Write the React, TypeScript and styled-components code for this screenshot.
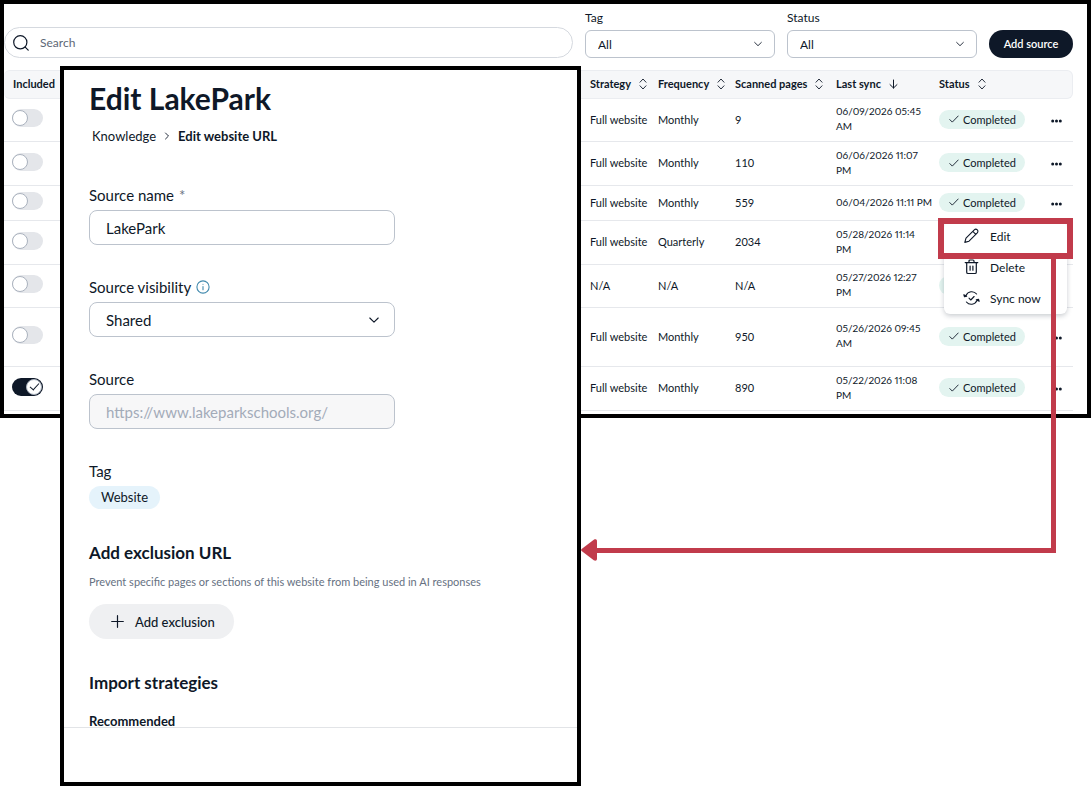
import React from "react";
import styled, { createGlobalStyle, css } from "styled-components";

const ink = "#0e1828";
const accent = "#c13b4b";

const GlobalStyle = createGlobalStyle`
  *, *::before, *::after { box-sizing: border-box; }
  body { margin: 0; background: #fff; }
  body, button, input, select {
    font-family: Lato, "Liberation Sans", sans-serif;
    color: ${ink};
  }
`;

const Canvas = styled.main`
  display: grid;
  grid-template-columns: 60px minmax(0, 521fr) minmax(0, 510fr);
  align-items: start;
`;

const ListFrame = styled.section`
  grid-area: 1 / 1 / 2 / 4;
  border: 4px solid #000;
  padding: 6px 14px 3px 0;
`;

const Toolbar = styled.div`
  display: flex;
  align-items: flex-end;
  gap: 12px;
  margin-bottom: 12px;
`;

const SearchBox = styled.label`
  flex: 1;
  display: flex;
  align-items: center;
  gap: 11px;
  height: 31px;
  padding: 0 8px;
  border: 1px solid #d5d9df;
  border-radius: 16px;
`;

const SearchInput = styled.input`
  flex: 1;
  min-width: 0;
  border: 0;
  padding: 0;
  outline: none;
  background: transparent;
  font-size: 12px;
  &::placeholder { color: #5d6776; opacity: 1; }
`;

const Filter = styled.div`
  width: 190px;
  display: flex;
  flex-direction: column;
  gap: 4px;
`;

const FilterLabel = styled.label`
  font-size: 12px;
  line-height: 16px;
`;

const SelectWrap = styled.div<{ $large?: boolean }>`
  display: grid;
  align-items: center;
  select, svg { grid-area: 1 / 1; }
  svg {
    justify-self: end;
    margin-right: ${(p) => (p.$large ? 16 : 13)}px;
    pointer-events: none;
  }
`;

const fieldBox = css<{ $large?: boolean }>`
  width: 100%;
  height: ${(p) => (p.$large ? 35 : 28)}px;
  padding: 0 ${(p) => (p.$large ? 16 : 12)}px;
  border: 1px solid #bcc3cd;
  border-radius: ${(p) => (p.$large ? 8 : 6)}px;
  background: #fff;
  font-size: ${(p) => (p.$large ? 15 : 12)}px;
`;

const Select = styled.select<{ $large?: boolean }>`
  ${fieldBox}
  appearance: none;
`;

const TextInput = styled.input<{ $large?: boolean }>`
  ${fieldBox}
  &:disabled {
    background: #f7f7f8;
    color: #a3abb8;
  }
`;

const PrimaryButton = styled.button`
  width: 84px;
  height: 28px;
  padding: 0 0 2px;
  border: 0;
  border-radius: 14px;
  background: ${ink};
  color: #fff;
  font-size: 11px;
  font-weight: 600;
`;

const Table = styled.table`
  width: 100%;
  table-layout: fixed;
  border-collapse: separate;
  border-spacing: 0;
  font-size: 11px;
  line-height: 15px;
`;

const HeadCell = styled.th<{ $width?: number }>`
  width: ${(p) => (p.$width ? `${p.$width}px` : "auto")};
  height: 29px;
  padding: 0 0 2px 9px;
  background: #f6f7f9;
  border: solid #ebedf1;
  border-width: 1px 0;
  text-align: left;
  font-weight: 700;
  white-space: nowrap;
  &:first-child { border-radius: 6px 0 0 6px; }
  &:last-child { border-right-width: 1px; border-radius: 0 6px 6px 0; }
`;

const HeadLabel = styled.span`
  display: flex;
  align-items: center;
  gap: 8px;
`;

const Row = styled.tr<{ $height: number }>`
  height: ${(p) => p.$height}px;
`;

const Cell = styled.td`
  padding: 0 0 2px 9px;
  border-bottom: 1px solid #e6e8ec;
  white-space: nowrap;
  &:first-child { padding-left: 8px; }
`;

const DateCell = styled(Cell)`
  font-size: 10px;
  white-space: pre;
  font-variant-numeric: proportional-nums;
`;

const ActionCell = styled(Cell)`
  position: relative;
  padding-left: 0;
  text-align: center;
`;

const Toggle = styled.input`
  appearance: none;
  display: grid;
  align-items: center;
  width: 31px;
  height: 18px;
  margin: 0 0 2px;
  border-radius: 9px;
  background: #e4e6ea;
  &::before {
    content: "";
    grid-area: 1 / 1;
    width: 16px;
    height: 16px;
    border: 1px solid #aab2be;
    border-radius: 50%;
    background: #fff;
  }
  &:checked { background: ${ink}; }
  &:checked::before { justify-self: end; margin-right: 1px; }
  &:checked::after {
    content: "";
    grid-area: 1 / 1;
    justify-self: end;
    width: 9px;
    height: 5px;
    margin: 0 4px 2px 0;
    border: solid ${ink};
    border-width: 0 0 1px 1px;
    rotate: -48deg;
  }
`;

const Pill = styled.span`
  display: inline-flex;
  align-items: center;
  gap: 4px;
  height: 19px;
  padding: 0 9px 0 10px;
  border-radius: 10px;
  background: #e3f4f0;
  vertical-align: middle;
`;

const IconButton = styled.button`
  display: inline-flex;
  padding: 4px;
  border: 0;
  background: none;
  vertical-align: middle;
`;

const Menu = styled.div`
  position: absolute;
  z-index: 2;
  top: 1px;
  right: 6px;
  width: 123px;
  display: grid;
  gap: 1px;
  border-radius: 6px;
  background: #fff;
  box-shadow: 0 2px 5px rgba(20, 30, 50, 0.22);
`;

const MenuItem = styled.button<{ $marked?: boolean }>`
  position: relative;
  display: flex;
  align-items: center;
  gap: 10px;
  height: 30px;
  padding: 0 19px 2px;
  border: 0;
  background: none;
  font-size: 12px;
  ${(p) =>
    p.$marked &&
    css`
      z-index: 1;
      &::after {
        content: "";
        position: absolute;
        inset: -4px -6px -7px;
        border: 6px solid ${accent};
      }
    `}
`;

const Editor = styled.section`
  grid-area: 1 / 2 / 2 / 3;
  z-index: 3;
  margin-top: 66px;
  border: 4px solid #000;
  background: #fff;
`;

const EditorBody = styled.div`
  padding: 12px 25px 0;
`;

const Title = styled.h1`
  margin: 0 0 12px;
  font-size: 30px;
  line-height: 32px;
  font-weight: 700;
`;

const Breadcrumb = styled.nav`
  display: flex;
  align-items: center;
  gap: 8px;
  margin-bottom: 39px;
  padding-left: 3px;
  font-size: 13px;
  line-height: 20px;
  a { color: inherit; text-decoration: none; }
  strong { font-weight: 700; }
`;

const Form = styled.form`
  display: grid;
  gap: 32px;
  max-width: 306px;
`;

const Field = styled.div`
  display: flex;
  flex-direction: column;
  align-items: flex-start;
  gap: 5px;
  > div { width: 100%; }
`;

const FieldLabel = styled.label`
  display: flex;
  align-items: center;
  gap: 5px;
  font-size: 15px;
  line-height: 20px;
`;

const Required = styled.span`
  color: #6b7482;
`;

const Chip = styled.span`
  height: 23px;
  padding: 0 12px;
  border-radius: 12px;
  background: #e5f3fb;
  font-size: 13px;
  line-height: 23px;
`;

const SectionTitle = styled.h2`
  margin: 33px 0 10px;
  font-size: 17px;
  line-height: 22px;
  font-weight: 700;
`;

const Hint = styled.p`
  margin: 0 0 14px;
  color: #667182;
  font-size: 11px;
  line-height: 16px;
  white-space: nowrap;
`;

const SecondaryButton = styled.button`
  display: flex;
  align-items: center;
  gap: 11px;
  height: 35px;
  padding: 0 19px 0 22px;
  border: 0;
  border-radius: 18px;
  background: #eff0f2;
  font-size: 13px;
  font-weight: 500;
`;

const SubTitle = styled.h3`
  margin: 21px 0 0;
  font-size: 13px;
  line-height: 12px;
  font-weight: 700;
`;

const EditorFooter = styled.footer`
  height: 55px;
  border-top: 1px solid #e2e4e7;
`;

const Connector = styled.div`
  grid-area: 1 / 3 / 2 / 4;
  z-index: 4;
  position: relative;
  height: 294px;
  margin: 259px 35px 0 8px;
  border: solid ${accent};
  border-width: 0 5px 5px 0;
  pointer-events: none;
  svg { position: absolute; left: -8px; bottom: -13px; }
`;

const line = {
  fill: "none",
  stroke: "currentColor",
  strokeLinecap: "round",
  strokeLinejoin: "round",
} as const;

const SearchIcon = () => (
  <svg width="16" height="16" viewBox="0 0 16 16" {...line} strokeWidth="1.2" aria-hidden>
    <circle cx="7.3" cy="7.3" r="6.6" />
    <path d="m12.2 12.2 3 3" />
  </svg>
);
const Chevron = ({ size = 8 }: { size?: number }) => (
  <svg width={size} height={size} viewBox="0 0 10 10" {...line} strokeWidth="1.1" aria-hidden>
    <path d="m.8 3 4.2 4.1L9.2 3" />
  </svg>
);
const Caret = () => (
  <svg width="6" height="8" viewBox="0 0 6 8" {...line} strokeWidth="0.9" aria-hidden>
    <path d="m1.5 1 3 3-3 3" />
  </svg>
);
const SortIcon = () => (
  <svg width="8" height="12" viewBox="0 0 8 12" {...line} strokeWidth="0.9" aria-hidden>
    <path d="M1 4.2 4 1l3 3.2M1 7.8 4 11l3-3.2" />
  </svg>
);
const DownIcon = () => (
  <svg width="9" height="10" viewBox="0 0 9 10" {...line} strokeWidth="1" aria-hidden>
    <path d="M4.5 1v8M1 5.6 4.5 9 8 5.600" />
  </svg>
);
const CheckIcon = () => (
  <svg width="10" height="8" viewBox="0 0 10 8" {...line} strokeWidth="0.9" aria-hidden>
    <path d="m.8 4.6 2.5 2.5L9.2 1" />
  </svg>
);
const DotsIcon = () => (
  <svg width="11" height="4" viewBox="0 0 11 4" fill="currentColor" aria-hidden>
    <circle cx="1.7" cy="2" r="1.5" />
    <circle cx="5.5" cy="2" r="1.5" />
    <circle cx="9.3" cy="2" r="1.5" />
  </svg>
);
const PencilIcon = () => (
  <svg width="17" height="16" viewBox="0 0 17 16" {...line} strokeWidth="1.1" aria-hidden>
    <path d="M1.8 14.4 3 10.2l8.300-8.400a2.100 2.100 0 0 1 3 3L6 13.200ZM9.800 3.400l3 3" />
  </svg>
);
const TrashIcon = () => (
  <svg width="17" height="16" viewBox="0 0 17 16" {...line} strokeWidth="1.2" aria-hidden>
    <path d="M2.2 3.600h12.600M3.700 3.600v9.600a1.300 1.300 0 0 0 1.300 1.300h7a1.300 1.300 0 0 0 1.300-1.300V3.600M6 3.400V2a1 1 0 0 1 1-1h3a1 1 0 0 1 1 1v1.400M7.100 7v4.200M9.900 7v4.200" />
  </svg>
);
const SyncIcon = () => (
  <svg width="17" height="16" viewBox="0 0 17 16" {...line} strokeWidth="1.1" aria-hidden>
    <path d="M3 5.400A6.300 6.300 0 0 1 13.600 4M14 10.600A6.300 6.300 0 0 1 3.400 12M6 8.200l1.800 1.800 3.300-3.500" />
    <path d="M.8 4.700 1.500 6.800l2.200-.6ZM16.200 11.300l-.7-2.100-2.200.6Z" fill="currentColor" />
  </svg>
);
const InfoIcon = () => (
  <svg width="14" height="14" viewBox="0 0 14 14" {...line} stroke="#4089ad" strokeWidth="1.1" aria-hidden>
    <circle cx="7" cy="7" r="6.1" />
    <path d="M7 6.500v3.300M7 4.200v.1" />
  </svg>
);
const PlusIcon = () => (
  <svg width="13" height="13" viewBox="0 0 13 13" {...line} strokeWidth="1.2" aria-hidden>
    <path d="M6.500.7v11.600M.7 6.500h11.600" />
  </svg>
);
const ArrowHead = () => (
  <svg width="17" height="22" viewBox="0 0 17 22" fill={accent} aria-hidden>
    <path d="M.6 10 12.800.8c1.500-1 3.200-.4 3.200 1.400v17.600c0 1.800-1.700 2.400-3.200 1.400L.6 12q-1-1 0-2Z" />
  </svg>
);

type Source = {
  strategy: string;
  frequency: string;
  pages: string;
  sync: string;
  status?: string;
  height: number;
  included?: boolean;
  menu?: boolean;
};

const sources: Source[] = [
  { strategy: "Full website", frequency: "Monthly", pages: "9", sync: "06/09/2026 05:45\nAM", status: "Completed", height: 43 },
  { strategy: "Full website", frequency: "Monthly", pages: "110", sync: "06/06/2026 11:07\nPM", status: "Completed", height: 44 },
  { strategy: "Full website", frequency: "Monthly", pages: "559", sync: "06/04/2026 11:11 PM", status: "Completed", height: 35 },
  { strategy: "Full website", frequency: "Quarterly", pages: "2034", sync: "05/28/2026 11:14\nPM", height: 44, menu: true },
  { strategy: "N/A", frequency: "N/A", pages: "N/A", sync: "05/27/2026 12:27\nPM", status: "Completed", height: 43 },
  { strategy: "Full website", frequency: "Monthly", pages: "950", sync: "05/26/2026 09:45\nAM", status: "Completed", height: 59 },
  { strategy: "Full website", frequency: "Monthly", pages: "890", sync: "05/22/2026 11:08\nPM", status: "Completed", height: 44, included: true },
];

const FilterSelect = ({ id, label }: { id: string; label: string }) => (
  <Filter>
    <FilterLabel htmlFor={id}>{label}</FilterLabel>
    <SelectWrap>
      <Select id={id}>
        <option>All</option>
      </Select>
      <Chevron />
    </SelectWrap>
  </Filter>
);

const SortHead = ({ label, width, down }: { label: string; width: number; down?: boolean }) => (
  <HeadCell $width={width}>
    <HeadLabel>
      {label}
      {down ? <DownIcon /> : <SortIcon />}
    </HeadLabel>
  </HeadCell>
);

const SourceRow = ({ source }: { source: Source }) => (
  <Row $height={source.height}>
    <Cell>
      <Toggle type="checkbox" role="switch" aria-label="Included" defaultChecked={source.included} />
    </Cell>
    <Cell>{source.strategy}</Cell>
    <Cell>{source.frequency}</Cell>
    <Cell>{source.pages}</Cell>
    <DateCell>{source.sync}</DateCell>
    <Cell>
      {source.status && (
        <Pill>
          <CheckIcon />
          {source.status}
        </Pill>
      )}
    </Cell>
    <ActionCell>
      <IconButton type="button" aria-label="More actions">
        <DotsIcon />
      </IconButton>
      {source.menu && (
        <Menu role="menu">
          <MenuItem type="button" role="menuitem" $marked>
            <PencilIcon />
            Edit
          </MenuItem>
          <MenuItem type="button" role="menuitem">
            <TrashIcon />
            Delete
          </MenuItem>
          <MenuItem type="button" role="menuitem">
            <SyncIcon />
            Sync now
          </MenuItem>
        </Menu>
      )}
    </ActionCell>
  </Row>
);

export default function App() {
  return (
    <>
      <GlobalStyle />
      <Canvas>
        <ListFrame>
          <Toolbar>
            <SearchBox>
              <SearchIcon />
              <SearchInput type="search" placeholder="Search" aria-label="Search" />
            </SearchBox>
            <FilterSelect id="filter-tag" label="Tag" />
            <FilterSelect id="filter-status" label="Status" />
            <PrimaryButton type="button">Add source</PrimaryButton>
          </Toolbar>
          <Table>
            <thead>
              <tr>
                <HeadCell>Included</HeadCell>
                <SortHead label="Strategy" width={68} />
                <SortHead label="Frequency" width={77} />
                <SortHead label="Scanned pages" width={101} />
                <SortHead label="Last sync" width={103} down />
                <SortHead label="Status" width={109} />
                <HeadCell $width={34} aria-label="Actions" />
              </tr>
            </thead>
            <tbody>
              {sources.map((source) => (
                <SourceRow key={source.sync} source={source} />
              ))}
            </tbody>
          </Table>
        </ListFrame>

        <Editor>
          <EditorBody>
            <Title>Edit LakePark</Title>
            <Breadcrumb aria-label="Breadcrumb">
              <a href="#knowledge">Knowledge</a>
              <Caret />
              <strong>Edit website URL</strong>
            </Breadcrumb>
            <Form>
              <Field>
                <FieldLabel htmlFor="source-name">
                  Source name <Required>*</Required>
                </FieldLabel>
                <TextInput $large id="source-name" defaultValue="LakePark" />
              </Field>
              <Field>
                <FieldLabel htmlFor="source-visibility">
                  Source visibility <InfoIcon />
                </FieldLabel>
                <SelectWrap $large>
                  <Select $large id="source-visibility">
                    <option>Shared</option>
                  </Select>
                  <Chevron size={10} />
                </SelectWrap>
              </Field>
              <Field>
                <FieldLabel htmlFor="source-url">Source</FieldLabel>
                <TextInput $large id="source-url" disabled defaultValue="https://www.lakeparkschools.org/" />
              </Field>
              <Field>
                <FieldLabel as="span">Tag</FieldLabel>
                <Chip>Website</Chip>
              </Field>
            </Form>
            <SectionTitle>Add exclusion URL</SectionTitle>
            <Hint>Prevent specific pages or sections of this website from being used in AI responses</Hint>
            <SecondaryButton type="button">
              <PlusIcon />
              Add exclusion
            </SecondaryButton>
            <SectionTitle>Import strategies</SectionTitle>
            <SubTitle>Recommended</SubTitle>
          </EditorBody>
          <EditorFooter />
        </Editor>

        <Connector>
          <ArrowHead />
        </Connector>
      </Canvas>
    </>
  );
}
